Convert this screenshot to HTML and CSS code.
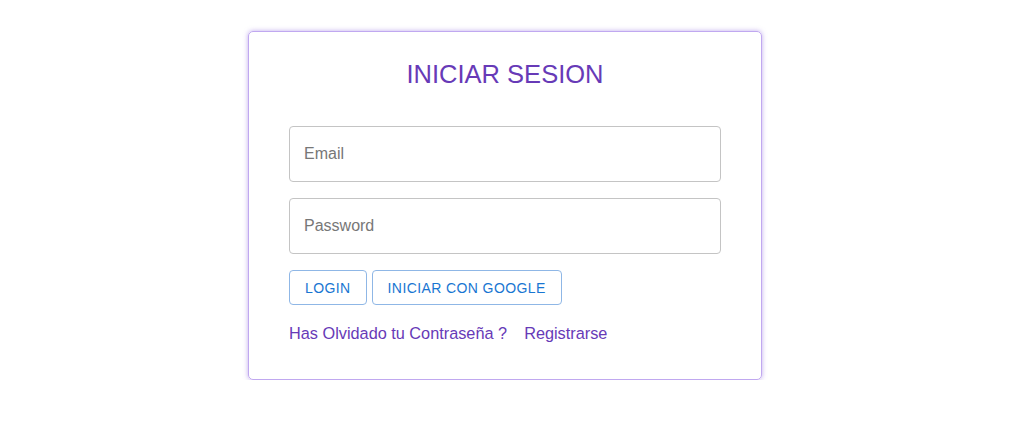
FILE: index.html
```html
<!DOCTYPE html>
<html lang="es">
<head>
<meta charset="utf-8">
<title>Iniciar sesión</title>
<link rel="stylesheet" href="styles.css">
</head>
<body>
<div class="page">
  <form class="card">
    <h1 class="title">INICIAR SESION</h1>
    <input class="field" type="email" placeholder="Email">
    <input class="field" type="password" placeholder="Password">
    <div class="actions">
      <button type="button" class="btn">LOGIN</button>
      <button type="button" class="btn">INICIAR CON GOOGLE</button>
    </div>
    <div class="links">
      <a class="link" href="#">Has Olvidado tu Contraseña ?</a>
      <a class="link" href="#">Registrarse</a>
    </div>
  </form>
</div>
</body>
</html>
```
FILE: styles.css
```css
html, body {
  margin: 0;
  padding: 0;
  background: #ffffff;
  font-family: "Liberation Sans", Arial, sans-serif;
}
.page {
  display: flex;
  padding: 31px 0 0 248px;
}
.card {
  width: 432px;
  padding: 0 40px 36px 40px;
  border: 1px solid #c0a8f0;
  border-radius: 5px;
  box-shadow: 0 0 5px rgba(140, 100, 220, 0.55);
  display: flex;
  flex-direction: column;
}
.title {
  margin: 28px 0 38px 0;
  text-align: center;
  font-weight: normal;
  font-size: 25.5px;
  line-height: 28px;
  color: #673ab7;
}
.field {
  box-sizing: border-box;
  height: 56px;
  width: 100%;
  margin: 0 0 16px 0;
  padding: 0 14px;
  border: 1px solid #c4c4c4;
  border-radius: 4px;
  font-family: inherit;
  font-size: 16px;
  color: #333;
  outline: none;
}
.field::placeholder {
  color: #777777;
}
.actions {
  display: flex;
  gap: 5px;
}
.btn {
  height: 35px;
  padding: 0 15px;
  background: #fff;
  border: 1px solid #8fb7e6;
  border-radius: 4px;
  color: #1976d2;
  font-family: inherit;
  font-size: 14px;
  letter-spacing: 0.4px;
}
.links {
  display: flex;
  gap: 17px;
  margin-top: 18px;
}
.link {
  font-size: 16.3px;
  line-height: 20px;
  color: #673ab7;
  text-decoration: none;
}
```
